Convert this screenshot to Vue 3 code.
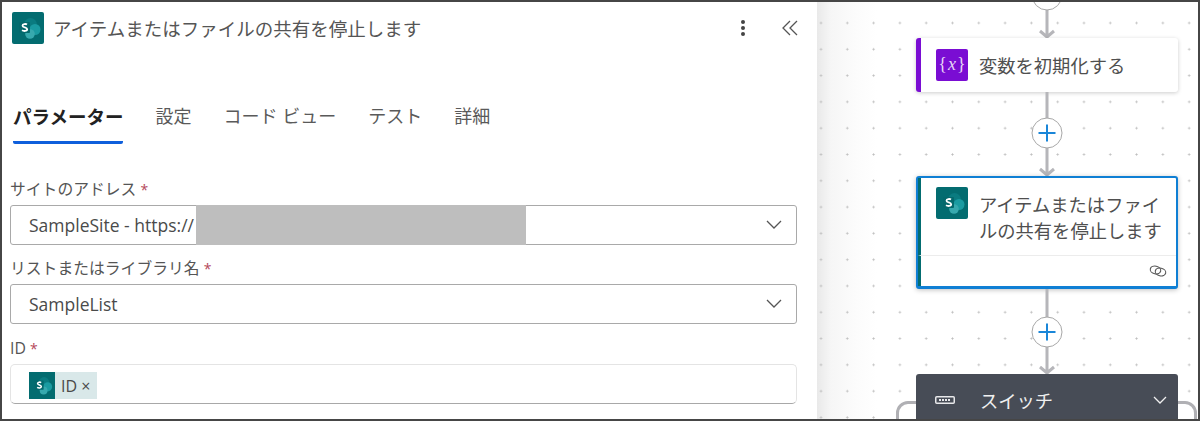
<template>
  <div class="frame">
    <section class="panel">
      <header class="head">
        <svg class="head-icon" width="32" height="32" viewBox="0 0 32 32">
          <rect width="32" height="32" rx="2" fill="#036c70" />
          <circle cx="18.5" cy="12.5" r="6.5" fill="#0a7b80" />
          <circle cx="23" cy="17.5" r="5.5" fill="#1a9ba1" />
          <circle cx="18" cy="22" r="4.8" fill="#37a9ae" />
          <rect x="7" y="10" width="11" height="11" rx="1" fill="#04686c" />
          <path class="s-mark" d="M15 12.500c-1-.7-4.500-.9-4.500 1.200 0 2.100 4.700 1.400 4.700 3.600 0 2.200-3.700 1.900-5.200 1" />
        </svg>
        <h1>アイテムまたはファイルの共有を停止します</h1>
        <svg class="dots" width="6" height="18" viewBox="0 0 6 18">
          <circle cx="3" cy="3" r="2" /><circle cx="3" cy="9" r="2" /><circle cx="3" cy="15" r="2" />
        </svg>
        <svg class="collapse" width="16" height="16" viewBox="0 0 16 16">
          <path d="M8 1 1 8l7 7M15 1 8 8l7 7" />
        </svg>
      </header>

      <nav class="tabs">
        <a v-for="t in tabs" :key="t" class="tab" :class="{ active: t === 'パラメーター' }">{{ t }}</a>
      </nav>

      <form class="fields" @submit.prevent>
        <div class="field">
          <label>サイトのアドレス <b>*</b></label>
          <div class="select">
            <span>SampleSite - https://</span>
            <i class="mask"></i>
            <svg class="chev" width="16" height="9" viewBox="0 0 16 9"><path d="M1 1l7 7 7-7" /></svg>
          </div>
        </div>
        <div class="field">
          <label>リストまたはライブラリ名 <b>*</b></label>
          <div class="select">
            <span>SampleList</span>
            <svg class="chev" width="16" height="9" viewBox="0 0 16 9"><path d="M1 1l7 7 7-7" /></svg>
          </div>
        </div>
        <div class="field id-field">
          <label>ID <b>*</b></label>
          <div class="select token-box">
            <div class="chip">
              <svg width="26" height="27" preserveAspectRatio="none" viewBox="0 0 32 32">
                <rect width="32" height="32" fill="#036c70" />
                <circle cx="18.5" cy="12.5" r="6.5" fill="#0a7b80" />
                <circle cx="23" cy="17.5" r="5.5" fill="#1a9ba1" />
                <circle cx="18" cy="22" r="4.8" fill="#37a9ae" />
                <rect x="7" y="10" width="11" height="11" rx="1" fill="#04686c" />
                <path class="s-mark" d="M15 12.500c-1-.7-4.500-.9-4.500 1.200 0 2.100 4.700 1.400 4.700 3.600 0 2.200-3.700 1.900-5.200 1" />
              </svg>
              <span>ID ×</span>
            </div>
          </div>
        </div>
      </form>
    </section>

    <section class="canvas">
      <div class="scope"></div>
      <div class="flow">
        <svg class="conn" width="34" height="36" viewBox="0 0 34 36">
          <path class="line" d="M17 0v35M10 29l7 6 7-6" />
          <circle class="ring" cx="17" cy="-7" r="15" />
        </svg>

        <div class="node var-node">
          <div class="var-icon">{<em>x</em>}</div>
          <span>変数を初期化する</span>
        </div>

        <svg class="conn" width="34" height="84" viewBox="0 0 34 84">
          <path class="line" d="M17 0v83M10 77l7 6 7-6" />
          <circle class="ring" cx="17" cy="41" r="15" />
          <path class="plus" d="M8.500 41h17M17 32.500v17" />
        </svg>

        <div class="node sp-node">
          <div class="sp-body">
            <svg width="32" height="32" viewBox="0 0 32 32">
              <rect width="32" height="32" rx="2" fill="#036c70" />
              <circle cx="18.5" cy="12.5" r="6.5" fill="#0a7b80" />
              <circle cx="23" cy="17.5" r="5.5" fill="#1a9ba1" />
              <circle cx="18" cy="22" r="4.8" fill="#37a9ae" />
              <rect x="7" y="10" width="11" height="11" rx="1" fill="#04686c" />
              <path class="s-mark" d="M15 12.500c-1-.7-4.500-.9-4.500 1.200 0 2.100 4.700 1.400 4.700 3.600 0 2.200-3.700 1.900-5.200 1" />
            </svg>
            <p>アイテムまたはファイルの共有を停止します</p>
          </div>
          <div class="sp-foot">
            <svg width="18" height="12" viewBox="0 0 18 12">
              <ellipse cx="6.500" cy="5" rx="5.300" ry="3.800" transform="rotate(12 6.500 5)" />
              <ellipse cx="11.500" cy="7" rx="5.300" ry="3.800" transform="rotate(12 11.500 7)" />
            </svg>
          </div>
        </div>

        <svg class="conn" width="34" height="85" viewBox="0 0 34 85">
          <path class="line" d="M17 0v84M10 78l7 6 7-6" />
          <circle class="ring" cx="17" cy="43" r="15" />
          <path class="plus" d="M8.500 43h17M17 34.500v17" />
        </svg>

        <div class="node switch-node">
          <svg width="20" height="8" viewBox="0 0 20 8">
            <rect x=".75" y=".75" width="18.500" height="6.500" rx="1" fill="none" stroke="#e8e8ea" stroke-width="1.500" />
            <path d="M4 4h12" stroke="#e8e8ea" stroke-width="2" stroke-dasharray="2 1" />
          </svg>
          <span>スイッチ</span>
          <svg class="switch-chev" width="14" height="8" viewBox="0 0 14 8"><path d="M1 1l6 6 6-6" /></svg>
        </div>
      </div>
    </section>
  </div>
</template>

<script setup>
const tabs = ["パラメーター", "設定", "コード ビュー", "テスト", "詳細"];
</script>

<style>
html,
body {
  margin: 0;
  background: #fff;
}
</style>

<style scoped>
.frame {
  box-sizing: border-box;
  width: 1200px;
  height: 421px;
  border: 2px solid #464646;
  display: flex;
  overflow: hidden;
  font-family: "Open Sans", "Noto Sans CJK JP", sans-serif;
  color: #4a4a4a;
  background: #fff;
}
.s-mark {
  fill: none;
  stroke: #fff;
  stroke-width: 1.800;
}

.panel {
  width: 815px;
  flex: none;
  box-sizing: border-box;
  padding: 10px 20px 0 8px;
}
.head {
  display: flex;
  align-items: center;
  height: 32px;
  padding-left: 2px;
}
.head-icon {
  flex: none;
}
.head h1 {
  margin: 0 0 0 9px;
  font-size: 18.500px;
  font-weight: 400;
  color: #555;
  flex: 1;
  white-space: nowrap;
}
.dots {
  fill: #444;
  margin-right: 36px;
}
.collapse {
  fill: none;
  stroke: #555;
  stroke-width: 1.300;
  margin-right: -1px;
}

.tabs {
  display: flex;
  gap: 32px;
  margin-top: 59px;
  padding-left: 3px;
}
.tab {
  font-size: 18px;
  line-height: 27px;
  height: 27px;
  padding-bottom: 11px;
  color: #5a5a5a;
  white-space: nowrap;
  border-bottom: 3px solid transparent;
}
.tab.active {
  font-size: 18.500px;
  font-weight: 700;
  color: #222;
  border-bottom-color: #0f5fdc;
  border-radius: 0 0 2px 2px;
}

.fields {
  margin-top: 34px;
  display: flex;
  flex-direction: column;
  gap: 12px;
}
.id-field {
  margin-top: 1px;
}
.field label {
  display: block;
  font-size: 15.800px;
  line-height: 22px;
  height: 22px;
  color: #555;
  white-space: nowrap;
}
.field label b {
  color: #b4475a;
  font-weight: 400;
  font-size: 14px;
}
.select {
  box-sizing: border-box;
  height: 40px;
  margin-top: 5px;
  position: relative;
  display: flex;
  align-items: center;
  padding-left: 18px;
  border: 1px solid #a9a9a9;
  border-radius: 3px;
  font-size: 17.500px;
  color: #4a4a4a;
}
.mask {
  width: 330px;
  align-self: stretch;
  background: #bebebe;
  margin: -1px 0 -1px 2px;
}
.chev {
  position: absolute;
  right: 14px;
  top: 14px;
  fill: none;
  stroke: #555;
  stroke-width: 1.300;
}
.token-box {
  border-color: #e4e4e4;
  border-bottom-color: #a8a8a8;
  border-radius: 5px;
}
.chip {
  display: flex;
  align-items: center;
  height: 27px;
  width: 68px;
  margin-top: 3px;
  background: #d9e8e9;
  font-size: 16px;
  white-space: nowrap;
}
.chip span {
  margin-left: 6px;
}

.canvas {
  flex: 1;
  position: relative;
  overflow: hidden;
  background-color: #fff;
  background-image: radial-gradient(circle, #bdbdbd 0.8px, transparent 1.300px),
    linear-gradient(to right, #e9e9e9, #f6f6f6 14px, #fcfcfc 40px, #fff 60px);
  background-size: 26.300px 26.300px, 100% 100%;
  background-position: -9.150px 7.850px, 0 0;
}
.scope {
  position: absolute;
  left: 79px;
  top: 399px;
  width: 301px;
  height: 60px;
  box-sizing: border-box;
  border: 3px solid #b0b0b4;
  border-radius: 12px;
  background: #fff;
}
.flow {
  position: relative;
  width: 262px;
  margin-left: 99px;
  display: flex;
  flex-direction: column;
  align-items: center;
}
.conn {
  flex: none;
  display: block;
}
.line {
  fill: none;
  stroke: #b6b6ba;
  stroke-width: 3;
}
.ring {
  fill: #fff;
  stroke: #a8a8a8;
  stroke-width: 1;
}
.plus {
  fill: none;
  stroke: #1a86d8;
  stroke-width: 2;
}

.node {
  box-sizing: border-box;
  width: 262px;
  flex: none;
  border-radius: 3px;
  background: #fff;
  box-shadow: 0 1px 4px rgba(0, 0, 0, 0.2);
  font-size: 18.300px;
  color: #4f4f4f;
}
.var-node {
  height: 54px;
  display: flex;
  align-items: center;
  gap: 11px;
  padding-left: 15px;
  border-left: 5px solid #7a0dd3;
}
.var-icon {
  width: 32px;
  height: 32px;
  border-radius: 2px;
  background: #7a0dd3;
  color: #e6d6f5;
  font-family: "Liberation Serif", serif;
  font-size: 18px;
  line-height: 30px;
  text-align: center;
}
.var-icon em {
  margin: 0 1px;
}
.sp-node {
  height: 113px;
  border: 2px solid #0f7fd4;
  border-bottom-width: 3px;
  box-shadow: 0 1px 5px rgba(0, 0, 0, 0.25);
  display: flex;
  flex-direction: column;
}
.sp-body {
  display: flex;
  gap: 11px;
  height: 77px;
  box-sizing: border-box;
  padding: 9px 8px 0 15px;
  border-left: 3px solid #036c70;
}
.sp-body svg {
  flex: none;
}
.sp-body p {
  margin: 5px 0 0;
  font-size: 18.300px;
  line-height: 26px;
}
.sp-foot {
  flex: 1;
  display: flex;
  justify-content: flex-end;
  align-items: center;
  padding-right: 9px;
  border-top: 1px solid #ececec;
  border-left: 3px solid #036c70;
}
.sp-foot svg {
  fill: none;
  stroke: #555;
  stroke-width: 1.100;
}
.switch-node {
  height: 60px;
  padding: 0 11px 8px 19px;
  display: flex;
  align-items: center;
  background: #474c56;
  color: #f0f0f0;
  box-shadow: none;
}
.switch-node span {
  margin-left: 25px;
  flex: 1;
}
.switch-chev {
  fill: none;
  stroke: #f0f0f0;
  stroke-width: 1.300;
}
</style>
